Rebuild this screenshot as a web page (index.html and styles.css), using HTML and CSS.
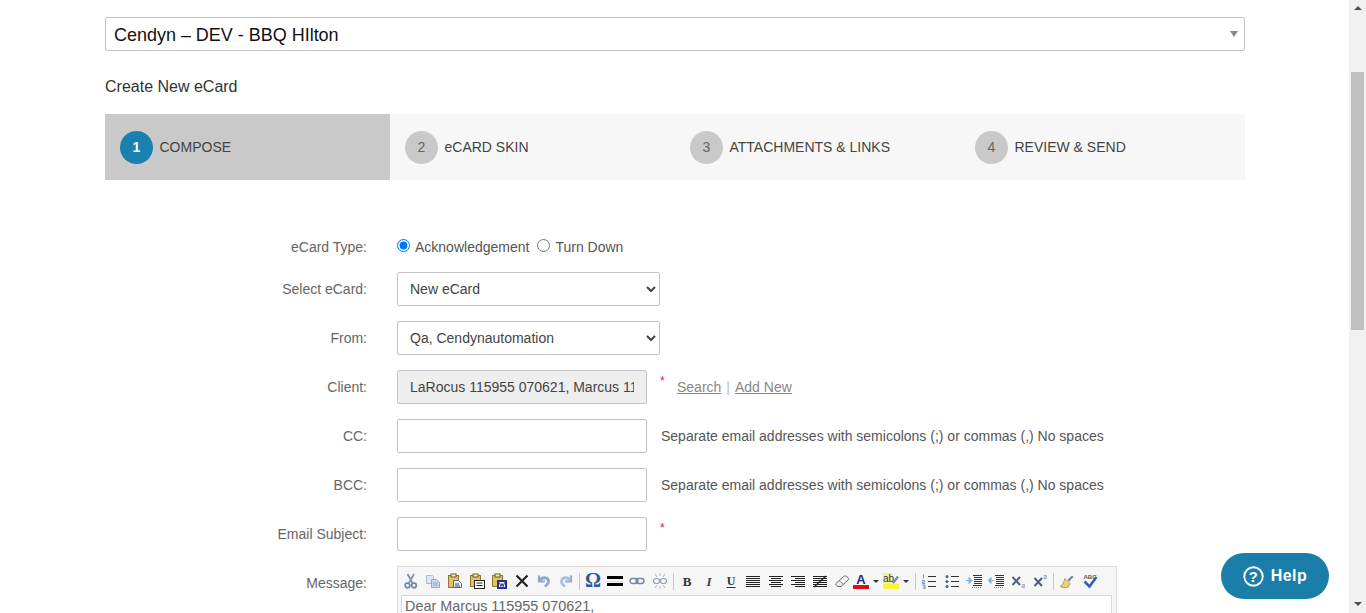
FILE: index.html
```html
<!DOCTYPE html>
<html lang="en">
<head>
<meta charset="utf-8">
<title>Create New eCard</title>
<link rel="stylesheet" href="styles.css">
</head>
<body>
<div class="page">
  <div class="property-select"><span class="property-name">Cendyn – DEV - BBQ HIlton</span><i class="caret"></i></div>
  <h1 class="title">Create New eCard</h1>
  <ol class="steps">
    <li class="step active"><b class="num">1</b><span>COMPOSE</span></li>
    <li class="step"><b class="num">2</b><span>eCARD SKIN</span></li>
    <li class="step"><b class="num">3</b><span>ATTACHMENTS &amp; LINKS</span></li>
    <li class="step"><b class="num">4</b><span>REVIEW &amp; SEND</span></li>
  </ol>
  <form class="form">
    <div class="row row-type">
      <label class="lbl">eCard Type:</label>
      <div class="radios">
        <input type="radio" name="t" class="radio" checked><span class="radio-text">Acknowledgement</span>
        <input type="radio" name="t" class="radio radio-second"><span class="radio-text">Turn Down</span>
      </div>
    </div>
    <div class="row"><label class="lbl">Select eCard:</label><select class="field sel"><option>New eCard</option></select></div>
    <div class="row"><label class="lbl">From:</label><select class="field sel"><option>Qa, Cendynautomation</option></select></div>
    <div class="row"><label class="lbl">Client:</label><input class="field inp ro" readonly value="LaRocus 115955 070621, Marcus 115955 070621"><sup class="req">*</sup><a class="lnk lnk-first">Search</a><span class="pipe">|</span><a class="lnk">Add New</a></div>
    <div class="row"><label class="lbl">CC:</label><input class="field inp"><span class="hint">Separate email addresses with semicolons (;) or commas (,) No spaces</span></div>
    <div class="row"><label class="lbl">BCC:</label><input class="field inp"><span class="hint">Separate email addresses with semicolons (;) or commas (,) No spaces</span></div>
    <div class="row"><label class="lbl">Email Subject:</label><input class="field inp"><sup class="req">*</sup></div>
    <div class="row row-msg">
      <label class="lbl">Message:</label>
      <div class="editor">
        <div class="toolbar">
          <span class="btn"><svg viewBox="0 0 16 16"><path d="M4.500 1 9.500 10M11 1 6 10" stroke="#7f93b3" stroke-width="1.800" fill="none"/><circle cx="4.500" cy="12.500" r="2.300" fill="none" stroke="#6f86ab" stroke-width="1.700"/><circle cx="11" cy="12.500" r="2.300" fill="none" stroke="#6f86ab" stroke-width="1.700"/></svg></span>
          <span class="btn"><svg viewBox="0 0 16 16"><path d="M1.500 2.500h6l1 1v7h-7z" fill="#dfe8f3" stroke="#a9bcd4"/><path d="M6.500 6.500h5l3 3v5h-8z" fill="#c9d9ec" stroke="#8fa9c9"/><path d="M8 10h5M8 12h5" stroke="#8fa9c9"/></svg></span>
          <span class="btn"><svg viewBox="0 0 16 16"><rect x="1.500" y="2.500" width="10" height="12" fill="#e6bf62" stroke="#8f7433"/><rect x="4" y="1" width="5" height="3" fill="#f4e9c4" stroke="#6f5a28"/><path d="M6.500 7.500h5l3 3v4h-8z" fill="#eef1f7" stroke="#5b6378"/><path d="M8 11h4M8 13h5" stroke="#3d4763"/></svg></span>
          <span class="btn"><svg viewBox="0 0 16 16"><rect x="1.500" y="2.500" width="10" height="11" fill="#e6bf62" stroke="#8f7433"/><rect x="4" y="1" width="5" height="3" fill="#f4e9c4" stroke="#6f5a28"/><rect x="5.500" y="7.500" width="10" height="8" fill="#fff" stroke="#222"/><path d="M7.500 10h6M7.500 12.500h6" stroke="#222"/></svg></span>
          <span class="btn"><svg viewBox="0 0 16 16"><rect x="1.500" y="2.500" width="10" height="11" fill="#e6bf62" stroke="#8f7433"/><rect x="4" y="1" width="5" height="3" fill="#f4e9c4" stroke="#6f5a28"/><rect x="6" y="7" width="10" height="9" fill="#23318f"/><path d="M8 9h6v5H8z" fill="#fff"/><path d="M8.500 9.500 9.800 13.500 11 10.500 12.200 13.500 13.500 9.500" fill="none" stroke="#23318f"/></svg></span>
          <span class="btn"><svg viewBox="0 0 16 16"><path d="M2.500 2.500 13.500 13.500M13.500 2.500 2.500 13.500" stroke="#222" stroke-width="2.200"/></svg></span>
          <span class="btn"><svg viewBox="0 0 16 16"><path d="M3 2.500v6h6" fill="none" stroke="#8aa9d3" stroke-width="2.200"/><path d="M4 7.500C6 3.500 12 4 12.500 8c.3 2.500-1.500 4-3.500 5.500" fill="none" stroke="#8aa9d3" stroke-width="2.800"/></svg></span>
          <span class="btn"><svg viewBox="0 0 16 16"><path d="M13 2.500v6H7" fill="none" stroke="#8aa9d3" stroke-width="2.200"/><path d="M12 7.500C10 3.500 4 4 3.500 8c-.3 2.500 1.500 4 3.500 5.500" fill="none" stroke="#a9bfdd" stroke-width="2.800"/></svg></span>
          <span class="sep"></span>
          <span class="btn"><svg class="svg-over" viewBox="0 0 16 16"><text x="8" y="14" text-anchor="middle" class="t-omega">Ω</text></svg></span>
          <span class="btn"><svg viewBox="0 0 16 16"><path d="M0 4.500h16" stroke="#000" stroke-width="3"/><path d="M0 8.500h16" stroke="#ddd"/><path d="M0 11.500h16" stroke="#000" stroke-width="3"/></svg></span>
          <span class="btn"><svg viewBox="0 0 16 16"><rect x="1" y="5.500" width="8" height="5" rx="2.500" fill="none" stroke="#7587a3" stroke-width="1.400"/><rect x="7" y="5.500" width="8" height="5" rx="2.500" fill="none" stroke="#7587a3" stroke-width="1.400"/></svg></span>
          <span class="btn"><svg viewBox="0 0 16 16"><rect x="1.500" y="5.500" width="6" height="5" rx="2.500" fill="none" stroke="#8fa0b8" stroke-width="1.200"/><rect x="8.500" y="5.500" width="6" height="5" rx="2.500" fill="none" stroke="#8fa0b8" stroke-width="1.200"/><path d="M8 0v3M8 13v3M3 1l2 3M13 1l-2 3M3 15l2-3M13 15l-2-3" stroke="#b9b9b9"/></svg></span>
          <span class="sep"></span>
          <span class="btn"><svg viewBox="0 0 16 16"><text x="8" y="12.500" text-anchor="middle" class="t-b">B</text></svg></span>
          <span class="btn"><svg viewBox="0 0 16 16"><text x="8" y="12.500" text-anchor="middle" class="t-i">I</text></svg></span>
          <span class="btn"><svg viewBox="0 0 16 16"><text x="8" y="11.500" text-anchor="middle" class="t-u">U</text><path d="M3.500 14.500h9" stroke="#333"/></svg></span>
          <span class="btn"><svg viewBox="0 0 16 16"><path d="M1 3.500h14M1 5.500h14M1 7.500h14M1 9.500h14M1 11.500h14M1 13.500h14" stroke="#222"/></svg></span>
          <span class="btn"><svg viewBox="0 0 16 16"><path d="M1 3.500h14M3 5.500h10M1 7.500h14M3 9.500h10M1 11.500h14M3 13.500h10" stroke="#222"/></svg></span>
          <span class="btn"><svg viewBox="0 0 16 16"><path d="M1 3.500h14M5 5.500h10M1 7.500h14M5 9.500h10M1 11.500h14M5 13.500h10" stroke="#222"/></svg></span>
          <span class="btn"><svg viewBox="0 0 16 16"><path d="M1 3.500h14M1 5.500h14M1 7.500h14M1 9.500h14M1 11.500h14M1 13.500h14" stroke="#222"/><path d="M2 14 14 3" stroke="#222" stroke-width="1.300"/></svg></span>
          <span class="btn"><svg viewBox="0 0 16 16"><path d="M1.500 11 9.500 3.500c1-.8 2-.8 3 0l1.500 1.200c.8.800.8 1.600 0 2.500L7 13.500H3.500z" fill="#f3f3f3" stroke="#666"/><path d="M5 7.500 10 12" stroke="#888"/></svg></span>
          <span class="btn btn-split"><svg viewBox="0 0 16 16"><text x="8" y="11" text-anchor="middle" class="t-a">A</text><rect x="0" y="12" width="16" height="4" fill="#d8101c"/></svg><i class="drop"></i></span>
          <span class="btn btn-split"><svg viewBox="0 0 16 16"><rect x="0" y="10.500" width="16" height="5.500" fill="#f8f33d"/><rect x="0" y="0" width="10" height="11" fill="#f3efa2"/><text x="0" y="9" class="t-ab">ab</text><path d="M10 10 15 3.500" stroke="#6f8bb3" stroke-width="2.200"/></svg><i class="drop"></i></span>
          <span class="sep"></span>
          <span class="btn"><svg viewBox="0 0 16 16"><path d="M7 3.500h8M7 8.500h8M7 13.500h8" stroke="#333" stroke-width="1.100"/><path d="M2.500 1.500v4M1 7.500h2.500v1.500H1.500v1.500H4M1 12h3v4H1M2 14h2" stroke="#6a88c0" fill="none" stroke-width=".9"/></svg></span>
          <span class="btn"><svg viewBox="0 0 16 16"><path d="M7 3.500h8M7 8.500h8M7 13.500h8" stroke="#333" stroke-width="1.100"/><circle cx="3" cy="3.500" r="1.500" fill="#54657f"/><circle cx="3" cy="8.500" r="1.500" fill="#54657f"/><circle cx="3" cy="13.500" r="1.500" fill="#54657f"/></svg></span>
          <span class="btn"><svg viewBox="0 0 16 16"><path d="M7 2.500h9M8 4.500h8M8 6.500h8M8 8.500h8M8 10.500h8M7 12.500h9" stroke="#333"/><path d="M0 7.500h4M3 4.500v6l3-3z" stroke="#7fb2dc" fill="#7fb2dc"/><path d="M6 14.500h9" stroke="#777" stroke-dasharray="1 1"/></svg></span>
          <span class="btn"><svg viewBox="0 0 16 16"><path d="M7 2.500h9M8 4.500h8M8 6.500h8M8 8.500h8M8 10.500h8M7 12.500h9" stroke="#333"/><path d="M2 7.500h4M3 4.500v6l-3-3z" stroke="#7fb2dc" fill="#7fb2dc"/><path d="M6 14.500h9" stroke="#777" stroke-dasharray="1 1"/></svg></span>
          <span class="btn"><svg viewBox="0 0 16 16"><path d="M2.500 4 10 12M10 4l-7.500 8" stroke="#4e5f7c" stroke-width="2"/><path d="M12 11.500h2.500v1.500H12v1.500h3" stroke="#8a97ad" fill="none" stroke-width=".8"/></svg></span>
          <span class="btn"><svg viewBox="0 0 16 16"><path d="M2.500 5 10 13M10 5l-7.500 8" stroke="#4e5f7c" stroke-width="2"/><path d="M12 2.500h2.500V4H12v1.500h3" stroke="#8a97ad" fill="none" stroke-width=".8"/></svg></span>
          <span class="sep"></span>
          <span class="btn"><svg viewBox="0 0 16 16"><path d="M8.500 7 13 2.500l1.500 1.500L10 8.500z" fill="#6b7fa3"/><path d="M6 5.500l5 5-2 3.500c-2.500 1-6 .5-8-.5 2-1 3.500-3 5-8z" fill="#ecd078" stroke="#a48936" stroke-width=".8"/></svg></span>
          <span class="btn"><svg viewBox="0 0 16 16"><text x="8" y="6" text-anchor="middle" class="t-abc">ABC</text><path d="M2.500 8.500 7.500 13.500 14.500 4" fill="none" stroke="#2f62b5" stroke-width="2.600"/></svg></span>
        </div>
        <div class="edit-area">Dear Marcus 115955 070621,</div>
      </div>
    </div>
  </form>
</div>
<a class="help"><svg class="help-icon" viewBox="0 0 20 20"><circle cx="10" cy="10" r="8.800" fill="none" stroke="#fff" stroke-width="1.800"/><text x="10" y="15" text-anchor="middle" class="t-help">?</text></svg><span>Help</span></a>
<div class="scrollbar"><i class="sb-up"></i><i class="sb-thumb"></i><i class="sb-down"></i></div>
</body>
</html>
```
FILE: styles.css
```css
html, body { margin: 0; height: 613px; overflow: hidden; background: #fff; }
body { font-family: "Liberation Sans", Arial, sans-serif; font-size: 14px; color: #555; }
.page { width: 1140px; padding: 17px 0 0 105px; }
.property-select { height: 32px; border: 1px solid #c4c4c4; border-radius: 2px; display: flex; align-items: center; justify-content: space-between; padding: 0 8px; font-size: 18px; color: #111; }
.property-name { padding-top: 2px; letter-spacing: -.02px; }
.caret { width: 0; height: 0; border: 4px solid transparent; border-top: 6px solid #888; border-bottom: 0; margin-right: -2px; }
.title { font-size: 16px; font-weight: 400; color: #333; margin: 26px 0 17px; line-height: 20px; }
.steps { list-style: none; margin: 0; padding: 0; display: flex; height: 66px; background: #f7f7f7; }
.step { width: 285px; display: flex; align-items: center; gap: 6.5px; padding-left: 15px; box-sizing: border-box; color: #444; }
.step.active { background: #c9c9c9; }
.num { width: 33px; height: 33px; border-radius: 50%; background: #c9c9c9; color: #666; font-weight: 400; display: flex; align-items: center; justify-content: center; }
.active .num { background: #1a80b0; color: #fff; font-weight: 700; }
.form { margin-top: 57px; }
.row { display: flex; align-items: center; height: 34px; margin-bottom: 15px; }
.row-type { height: 20px; }
.row-msg { align-items: flex-start; height: auto; margin: 0; }
.lbl { width: 262px; text-align: right; margin-right: 30px; color: #666; flex: none; }
.row-msg .lbl { line-height: 34px; }
.radios { display: flex; align-items: center; color: #555; }
.radio { width: 13px; height: 13px; margin: -3px 5px 0 0; accent-color: #0075ff; }
.radio-second { margin-left: 8px; }
.field { box-sizing: border-box; height: 34px; border: 1px solid #c4c4c4; border-radius: 2px; background: #fff; font: 14px "Liberation Sans", Arial, sans-serif; color: #444; padding: 0 12px; flex: none; }
.sel { width: 263px; padding: 0 8px; }
.inp { width: 250px; outline: 0; }
.ro { background: #eee; }
.req { color: #d9232e; font-size: 12px; margin: -13px 0 0 13px; width: 17px; line-height: 14px; }
.lnk { color: #888; text-decoration: underline; }
.pipe { color: #bbb; margin: 0 5px; }
.hint { margin-left: 14px; color: #555; }
.editor { width: 720px; box-sizing: border-box; border: 1px solid #ddd; background: #f6f6f6; padding: 0 4px 4px 2px; }
.toolbar { display: flex; align-items: center; height: 28px; }
.btn { flex: none; width: 22.1px; display: flex; align-items: center; justify-content: center; }
.btn svg { width: 16px; height: 16px; flex: none; }
.btn .svg-over { overflow: visible; }
.btn-split { width: 30px; justify-content: flex-start; }
.drop { width: 0; height: 0; border: 3px solid transparent; border-top: 3px solid #333; border-bottom: 0; margin-left: 4px; }
.sep { flex: none; width: 1px; height: 17px; background: #c8c8c8; margin: 0 2.5px 0 2px; }
.edit-area { background: #fff; border: 1px solid #d8d8d8; margin-left: 1px; padding: 3px 3px 0; height: 100px; color: #666; font-size: 14.4px; line-height: 15px; }
.t-omega { font: 700 20px "Liberation Serif", serif; fill: #2b5b9e; }
.t-b { font: 700 13px "Liberation Serif", serif; fill: #333; }
.t-i { font: italic 700 13px "Liberation Serif", serif; fill: #444; }
.t-u { font: 700 12px "Liberation Serif", serif; fill: #333; }
.t-a { font: 700 13px "Liberation Sans", sans-serif; fill: #1c2a78; }
.t-ab { font: 10px "Liberation Sans", sans-serif; fill: #333; }
.t-abc { font: 700 6px "Liberation Sans", sans-serif; fill: #555; }
.t-help { font: 700 14px "Liberation Sans", sans-serif; fill: #fff; }
.help { position: fixed; left: 1221px; top: 553px; width: 108px; height: 46px; border-radius: 23px; background: #1a7ea8; color: #fff; font-weight: 700; font-size: 16px; letter-spacing: .4px; display: flex; align-items: center; justify-content: center; gap: 7px; }
.help-icon { width: 21px; height: 21px; }
.scrollbar { position: fixed; left: 1349px; top: 0; width: 17px; height: 613px; background: #f1f1f1; }
.sb-thumb { position: absolute; left: 2px; top: 72px; width: 13px; height: 258px; background: #c1c1c1; }
.sb-up, .sb-down { position: absolute; left: 5px; width: 0; height: 0; border: 4px solid transparent; }
.sb-up { top: 6px; border-top: 0; border-bottom: 4px solid #505050; }
.sb-down { top: 602px; border-bottom: 0; border-top: 4px solid #505050; }
```
